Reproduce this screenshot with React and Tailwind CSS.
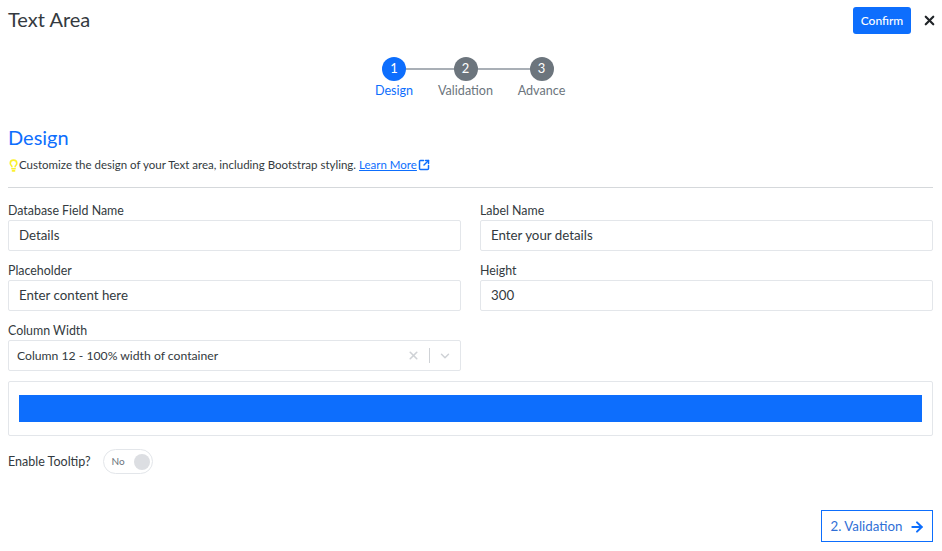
import { X, ChevronDown, ArrowRight, Lightbulb, SquareArrowOutUpRight } from "lucide-react";

const steps = [
  { num: 1, label: "Design", active: true, width: "w-[71px]", line: "" },
  { num: 2, label: "Validation", width: "w-[72px]", line: "w-[72px]" },
  { num: 3, label: "Advance", width: "w-[80px]", line: "w-[76px]" },
];

function Field({ label, value }) {
  return (
    <div>
      <label className="block text-[12.4px] leading-[19px] text-[#333a40]">{label}</label>
      <div className="flex h-[31px] items-center rounded-[2px] border border-[#e3e6ea] bg-white px-[10px] text-[13.3px] text-[#333a40]">
        {value}
      </div>
    </div>
  );
}

export default function App() {
  return (
    <div className="h-[551px] w-[942px] overflow-hidden bg-white pl-2 pr-[9px] font-['Lato',sans-serif] text-[#333a40]">
      <header className="flex h-[41px] items-start justify-between">
        <h1 className="mt-[6px] text-[20px] leading-[26px] text-[#343a40]">Text Area</h1>
        <div className="mt-[7px] flex items-center">
          <button className="flex h-[27px] w-[58px] items-center justify-center rounded-[3px] bg-[#0d6efd] text-[12px] font-medium text-white">
            Confirm
          </button>
          <X size={15} strokeWidth={3.5} className="ml-[11px] mr-[-4px] text-[#212529]" />
        </div>
      </header>

      <div className="mt-4 flex justify-center pr-px">
        {steps.map((step) => (
          <div key={step.num} className={`relative flex flex-col items-center ${step.width}`}>
            {step.line && <div className={`absolute right-1/2 top-[11px] h-[2px] bg-[#a9afb6] ${step.line}`} />}
            <div
              className={`relative z-10 flex h-6 w-6 items-center justify-center rounded-full text-[13px] text-white ${
                step.active ? "bg-[#0d6efd]" : "bg-[#6c757d]"
              }`}
            >
              {step.num}
            </div>
            <span className={`mt-px text-[12.6px] leading-[18px] ${step.active ? "text-[#0d6efd]" : "text-[#6c757d]"}`}>
              {step.label}
            </span>
          </div>
        ))}
      </div>

      <h2 className="mt-[24px] text-[20px] leading-[26px] text-[#0d6efd]">Design</h2>
      <p className="mt-[6px] flex h-[18px] items-center text-[11.5px]">
        <Lightbulb size={13} strokeWidth={3} className="-ml-[1px] text-[#fbf02e]" />
        <span className="-ml-px">Customize the design of your Text area, including Bootstrap styling.</span>
        <a className="ml-[3px] text-[#0d6efd] underline">Learn More</a>
        <SquareArrowOutUpRight size={12} strokeWidth={3} className="ml-[1px] text-[#0d6efd]" />
      </p>
      <hr className="mt-[13px] border-t border-[#d5d8db]" />

      <div className="mt-[13px] grid grid-cols-2 gap-x-[19px] gap-y-[10px]">
        <Field label="Database Field Name" value="Details" />
        <Field label="Label Name" value="Enter your details" />
        <Field label="Placeholder" value="Enter content here" />
        <Field label="Height" value="300" />
        <div>
          <label className="block text-[12.4px] leading-[19px]">Column Width</label>
          <div className="flex h-[31px] items-center rounded-[2px] border border-[#e3e6ea] bg-white pl-2 pr-[8px] text-[12.2px]">
            <span className="flex-1 pt-px">Column 12 - 100% width of container</span>
            <X size={13} strokeWidth={3} className="text-[#cfd2d6]" />
            <div className="ml-[9px] mr-[8px] h-[15px] w-px bg-[#cfd2d6]" />
            <ChevronDown size={14} strokeWidth={2.5} className="text-[#cfd2d6]" />
          </div>
        </div>
      </div>

      <div className="mt-[10px] h-[55px] rounded-[2px] border border-[#e3e6ea] px-[10px] pt-[13px]">
        <div className="h-[27px] bg-[#0d6efd]" />
      </div>

      <div className="mt-[13px] flex items-center">
        <span className="mt-[2px] text-[12.5px]">Enable Tooltip?</span>
        <div className="ml-[12px] flex h-[25px] w-[50px] items-center justify-between rounded-full border border-[#e3e6ea] pl-[8px] pr-[2px]">
          <span className="text-[10px] text-[#6c757d]">No</span>
          <div className="h-4 w-4 rounded-full bg-[#dcdee2]" />
        </div>
      </div>

      <div className="mt-[36px] flex justify-end">
        <button className="flex h-[32px] w-[112px] items-center justify-center gap-[7px] border border-[#0d6efd] pl-[2px] pt-px text-[13.3px] text-[#2f6fd6]">
          2. Validation
          <ArrowRight size={16} strokeWidth={3} className="text-[#0d6efd]" />
        </button>
      </div>
    </div>
  );
}
